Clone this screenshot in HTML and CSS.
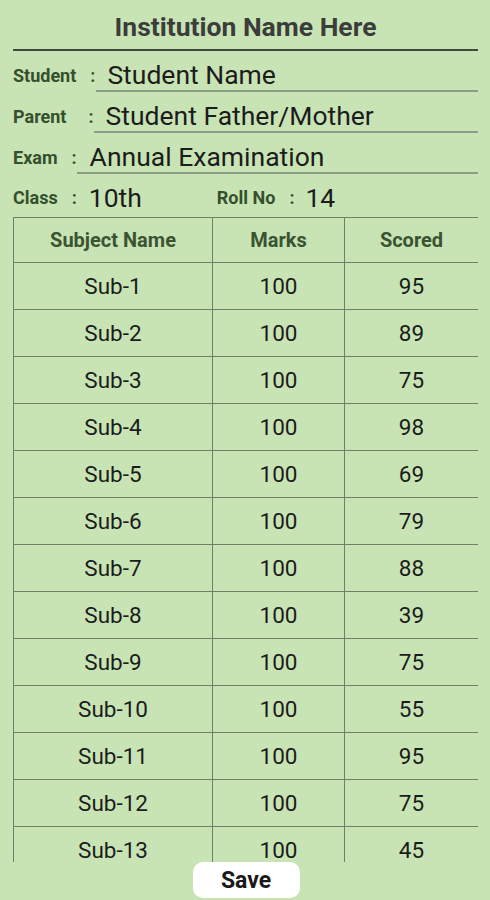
FILE: index.html
```html
<!DOCTYPE html>
<html>
<head>
<meta charset="utf-8">
<link rel="stylesheet" href="styles.css">
</head>
<body>
<div class="page">
  <h1 class="title">Institution Name Here</h1>
  <div class="field">
    <span class="label">Student</span><span class="colon colon-student">:</span>
    <span class="value value-student">Student Name</span>
  </div>
  <div class="field">
    <span class="label">Parent</span><span class="colon colon-parent">:</span>
    <span class="value value-parent">Student Father/Mother</span>
  </div>
  <div class="field">
    <span class="label">Exam</span><span class="colon colon-exam">:</span>
    <span class="value value-exam">Annual Examination</span>
  </div>
  <div class="field field-plain">
    <span class="label">Class</span><span class="colon colon-exam">:</span>
    <span class="plain plain-class">10th</span>
    <span class="label label-roll">Roll No</span><span class="colon colon-roll">:</span>
    <span class="plain plain-roll">14</span>
  </div>
  <div class="table-wrap">
    <table class="marks">
      <thead>
        <tr><th class="c1">Subject Name</th><th class="c2">Marks</th><th class="c3">Scored</th></tr>
      </thead>
      <tbody>
        <tr><td>Sub-1</td><td>100</td><td>95</td></tr>
        <tr><td>Sub-2</td><td>100</td><td>89</td></tr>
        <tr><td>Sub-3</td><td>100</td><td>75</td></tr>
        <tr><td>Sub-4</td><td>100</td><td>98</td></tr>
        <tr><td>Sub-5</td><td>100</td><td>69</td></tr>
        <tr><td>Sub-6</td><td>100</td><td>79</td></tr>
        <tr><td>Sub-7</td><td>100</td><td>88</td></tr>
        <tr><td>Sub-8</td><td>100</td><td>39</td></tr>
        <tr><td>Sub-9</td><td>100</td><td>75</td></tr>
        <tr><td>Sub-10</td><td>100</td><td>55</td></tr>
        <tr><td>Sub-11</td><td>100</td><td>95</td></tr>
        <tr><td>Sub-12</td><td>100</td><td>75</td></tr>
        <tr><td>Sub-13</td><td>100</td><td>45</td></tr>
      </tbody>
    </table>
  </div>
  <div class="actions">
    <button class="save">Save</button>
  </div>
</div>
</body>
</html>
```
FILE: styles.css
```css
* { box-sizing: border-box; }
html, body {
  margin: 0;
  padding: 0;
  background: #c8e4b4;
  font-family: Roboto, "Noto Sans", "Liberation Sans", sans-serif;
}
body {
  width: 490px;
  height: 900px;
  overflow: hidden;
}
.page {
  padding: 0 12px 0 13px;
}
.title {
  margin: 0;
  padding: 12px 0 7px;
  line-height: 30px;
  font-size: 26.5px;
  font-weight: 700;
  color: #3b3d3b;
  text-align: center;
  border-bottom: 2px solid #3e4a3b;
}
.field {
  display: flex;
  align-items: center;
  margin-top: 8px;
}
.label {
  font-size: 18px;
  font-weight: 700;
  color: #34502d;
}
.colon {
  font-size: 18px;
  font-weight: 700;
  color: #34502d;
}
.colon-student { margin-left: 14px; }
.colon-parent { margin-left: 22px; }
.colon-exam { margin-left: 14px; }
.colon-roll { margin-left: 14px; }
.value {
  flex: 1;
  line-height: 31px;
  height: 33px;
  font-size: 26.5px;
  color: #1c1c1c;
  border-bottom: 2px solid #8c9c87;
}
.value-student { margin-left: 1px; padding-left: 11px; }
.value-parent { margin-left: 0; padding-left: 12px; }
.value-exam { margin-left: 0; padding-left: 13px; }
.field-plain .label, .field-plain .colon, .field-plain .plain {
  line-height: 32px;
}
.plain {
  font-size: 26.5px;
  color: #1c1c1c;
}
.plain-class { margin-left: 12px; }
.label-roll { margin-left: 75px; }
.plain-roll { margin-left: 11px; }
.table-wrap {
  margin-top: 3px;
  height: 645px;
  overflow: hidden;
}
.marks {
  width: 465px;
  border-collapse: collapse;
  table-layout: fixed;
}
.marks th, .marks td {
  border: 1.5px solid #6f8069;
  text-align: center;
  padding: 0;
}
.marks th {
  height: 45px;
  font-size: 20px;
  font-weight: 700;
  color: #3a5432;
}
.marks td {
  height: 47px;
  font-size: 22.5px;
  color: #1c1c1c;
}
.c1 { width: 199px; }
.c2 { width: 132px; }
.c3 { width: 134px; }
.actions {
  display: flex;
  justify-content: center;
  padding-left: 1px;
}
.save {
  width: 107px;
  height: 36px;
  border: none;
  border-radius: 10px;
  background: #ffffff;
  font-family: Roboto, "Noto Sans", sans-serif;
  font-size: 23px;
  font-weight: 700;
  color: #1a1a1a;
  padding: 0;
}
```
